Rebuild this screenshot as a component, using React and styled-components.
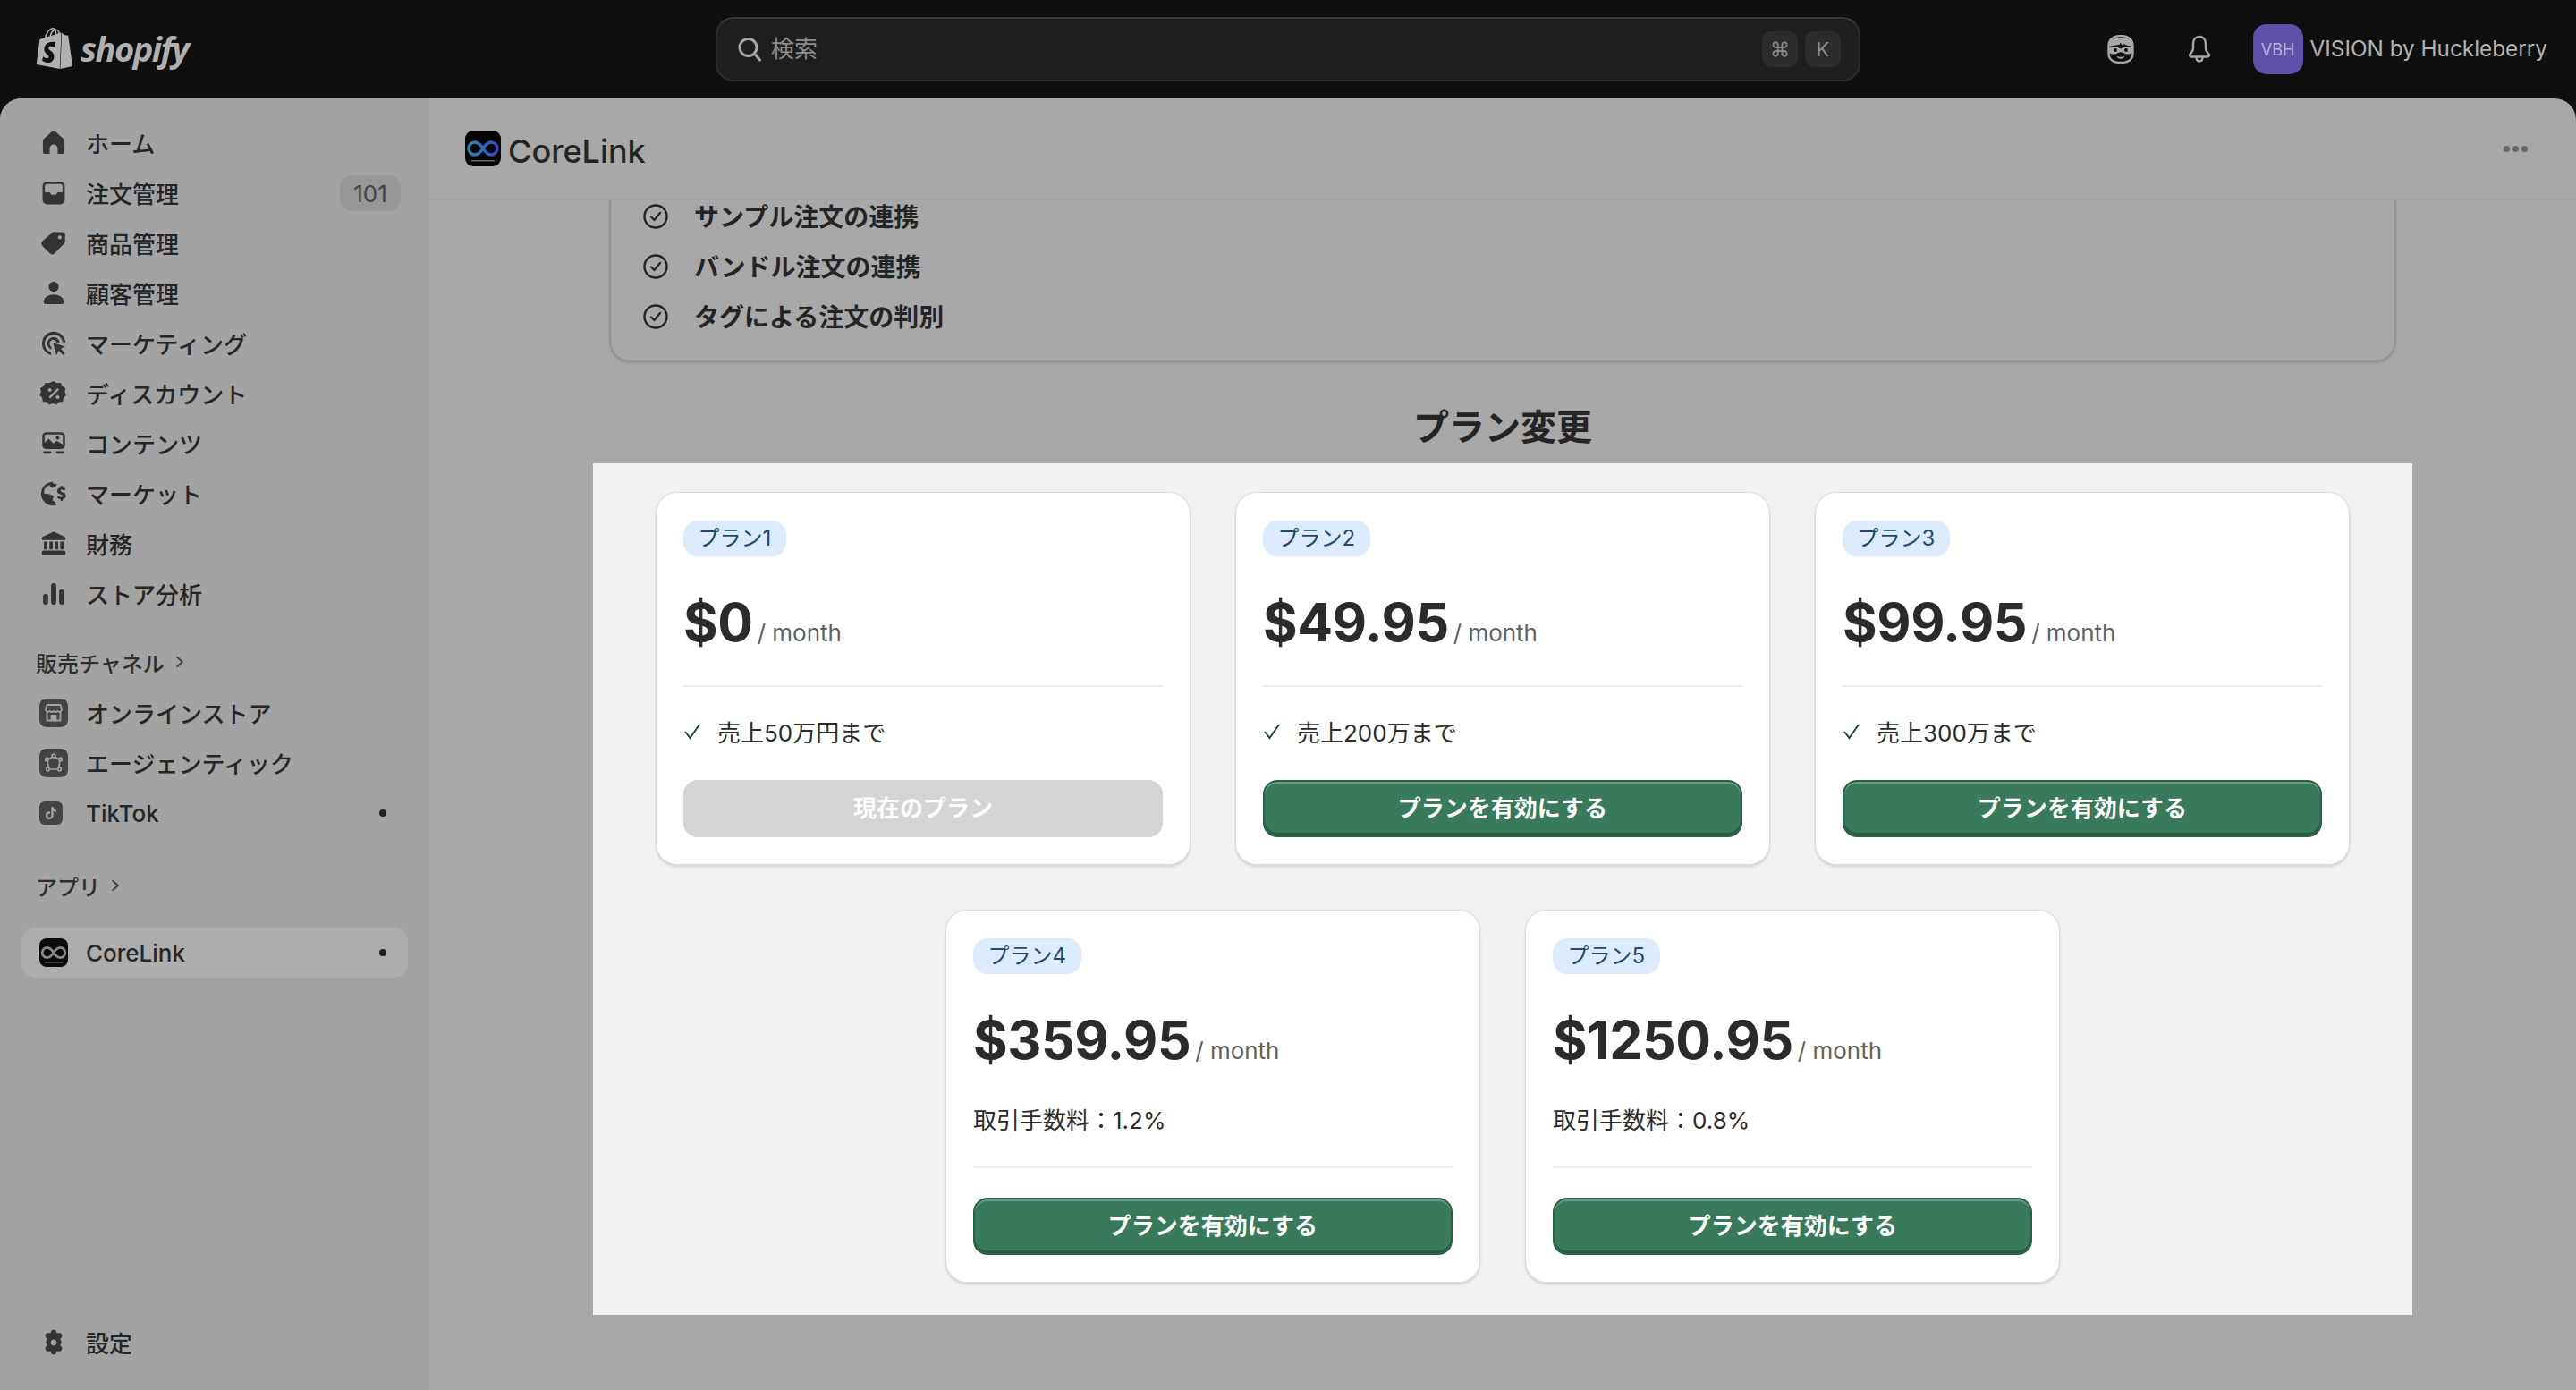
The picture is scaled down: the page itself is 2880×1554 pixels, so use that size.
import React from 'react';
import styled, { createGlobalStyle } from 'styled-components';
import { SiShopify, SiTiktok } from 'react-icons/si';

const GlobalStyle = createGlobalStyle`
  html, body {
    margin: 0;
    background: #0f0f0f;
  }
  body {
    font-family: Inter, "Noto Sans CJK JP", sans-serif;
  }
`;

const NavSvg = styled.svg`
  flex: none;
  margin: 0 -2px;
`;

const Icon = ({ children, size = 34, fill = '#333' }) => (
  <NavSvg width={size} height={size} viewBox="0 0 20 20" fill={fill} fillRule="evenodd">
    {children}
  </NavSvg>
);

const HomeIcon = () => (
  <Icon>
    <path d="M8.6 2.7 3.6 7.1A2 2 0 0 0 2.9 8.6V15.6A1.5 1.5 0 0 0 4.4 17.1H7.4V13.5A2.6 2.6 0 0 1 12.6 13.5V17.1H15.6A1.5 1.5 0 0 0 17.1 15.6V8.6A2 2 0 0 0 16.4 7.1L11.4 2.7A2.1 2.1 0 0 0 8.6 2.7Z" />
  </Icon>
);
const InboxIcon = () => (
  <Icon>
    <path d="M5.5 2.500h9A2.800 2.800 0 0 1 17.300 5.300v9.200a2.800 2.800 0 0 1-2.800 2.800h-9A2.800 2.800 0 0 1 2.700 14.500V5.300A2.800 2.800 0 0 1 5.500 2.500ZM5.500 4a1.300 1.300 0 0 0-1.300 1.300V9.400h3.300l.9 1.600h3.200l.9-1.600h3.300V5.300A1.300 1.300 0 0 0 14.500 4Z" />
  </Icon>
);
const TagIcon = () => (
  <Icon>
    <path d="M11.400 2.600h4.400a1.700 1.700 0 0 1 1.700 1.700v4.400a2.200 2.200 0 0 1-.6 1.500l-6.300 6.400a2.200 2.200 0 0 1-3.100 0l-4.900-4.900a2.200 2.200 0 0 1 0-3.100l6.300-5.400a2.200 2.200 0 0 1 2.500-.6ZM14 4.900a1.200 1.200 0 1 0 .01 0Z" />
  </Icon>
);
const PersonIcon = () => (
  <Icon>
    <circle cx="10" cy="5.600" r="3.300" />
    <path d="M10 10.800c-3.900 0-6.600 2.100-6.600 4.900 0 .8.600 1.300 1.300 1.300h10.600c.7 0 1.300-.5 1.300-1.300 0-2.800-2.700-4.900-6.600-4.900Z" />
  </Icon>
);
const TargetIcon = () => (
  <Icon>
    <path d="M10 2.200a7.800 7.800 0 0 0-1.600 15.400l-.3-1.800A6 6 0 1 1 15.900 9l1.800.6A7.800 7.800 0 0 0 10 2.200Z" />
    <path d="M10 5.800a4.200 4.200 0 0 0-1.300 8.200l-.4-2a2.400 2.400 0 1 1 3.700-2.600l2 .5A4.200 4.200 0 0 0 10 5.800Z" />
    <path d="M9.600 9.600l8 2.400-3 1.400 2.900 3-1.300 1.300-2.900-3-1.500 3.100Z" />
  </Icon>
);
const DiscountIcon = () => (
  <Icon>
    <path d="M10 1.800l2.100 1.300 2.500-.2 1 2.300 2.200 1.200-.5 2.500 1 2.200-1.900 1.700-.4 2.500-2.500.3-1.900 1.700-2.100-.9-2.300.9-1.900-1.700-2.500-.3-.4-2.500-1.700-1.700 1-2.200-.5-2.500 2.200-1.200 1-2.300 2.500.2Z M12.500 6.500 6.800 12.200l1 1 5.700-5.700Z M7.400 6.400a1.200 1.200 0 1 0 .01 0Z M12.600 11.200a1.200 1.200 0 1 0 .01 0Z" />
  </Icon>
);
const ContentIcon = () => (
  <Icon>
    <path d="M5 2.500h10A2.500 2.500 0 0 1 17.500 5v6A2.500 2.500 0 0 1 15 13.500H5A2.500 2.500 0 0 1 2.500 11V5A2.500 2.500 0 0 1 5 2.500ZM5 4a1 1 0 0 0-1 1v4.200l2.600-2.400 3.300 3 2.100-1.700L16 10.600V5a1 1 0 0 0-1-1ZM12.600 5a1.200 1.200 0 1 0 .01 0Z" />
    <rect x="3" y="15" width="5.600" height="1.600" rx=".8" />
    <rect x="11.400" y="15" width="5.600" height="1.600" rx=".8" />
  </Icon>
);
const MarketIcon = () => (
  <Icon>
    <path d="M9.500 2.200a7.800 7.800 0 0 0-1.200 15.500c1 .2 2.300.2 3.400-.1l-.8-2.200-1.700-1.200.8-2.700-3.300-1.300-3-.3a5.600 5.600 0 0 1 3.300-5.600l1.700 1.900 2.700-.9.700-1.500a7.800 7.800 0 0 0-2.600-.6Z" />
    <path d="M14.600 4.800v1.100c-1.400.2-2.300 1.100-2.300 2.300 0 1.400 1.100 1.900 2.300 2.300 1 .3 1.300.5 1.300 1 0 .4-.4.7-1.100.7-.6 0-1.300-.3-1.800-.7l-.8 1.200c.6.5 1.500.9 2.400 1v1h1.300v-1.100c1.400-.2 2.200-1.100 2.200-2.300 0-1.400-1-1.900-2.300-2.300-1-.3-1.200-.5-1.200-.9 0-.4.3-.7 1-.7.500 0 1 .2 1.500.5l.7-1.200c-.5-.4-1.100-.6-1.900-.7V4.800Z" />
  </Icon>
);
const BankIcon = () => (
  <Icon>
    <path d="M9.200 2.300 3.100 5.200c-.7.3-.9.8-.9 1.300v1h15.600v-1c0-.5-.2-1-.9-1.300l-6.100-2.900a1.900 1.900 0 0 0-1.600 0Z" />
    <path d="M3.600 8.500h2.200v5.200H3.600ZM7.200 8.500h2.200v5.200H7.200ZM10.800 8.500H13v5.200h-2.200ZM14.400 8.500h2.200v5.200h-2.200Z" />
    <rect x="2.200" y="14.400" width="15.600" height="3" rx="1" />
  </Icon>
);
const BarsIcon = () => (
  <Icon>
    <rect x="3" y="10" width="3.400" height="7" rx="1.500" />
    <rect x="8.300" y="3" width="3.400" height="14" rx="1.500" />
    <rect x="13.600" y="7" width="3.400" height="10" rx="1.500" />
  </Icon>
);
const GearIcon = () => (
  <Icon>
    <path d="M8.400 2.300c.4-1 2.800-1 3.200 0l.5 1.500 1.600-.2c1.200-.2 2.400 1.800 1.600 2.800l-1 1.200.7 1.400v1.400l-.7 1.400 1 1.200c.8 1-.4 3-1.600 2.800l-1.600-.2-.5 1.500c-.4 1-2.800 1-3.200 0l-.5-1.500-1.600.2c-1.200.2-2.400-1.800-1.600-2.800l1-1.200-.7-1.400V9.000l.7-1.400-1-1.200c-.8-1 .4-3 1.600-2.800l1.600.2ZM10 8.000a2.000 2.000 0 1 0 .01 0Z" />
  </Icon>
);
const Chevron = () => (
  <svg width="16" height="16" viewBox="0 0 14 14" fill="none" stroke="#444" strokeWidth="1.800" strokeLinecap="round" strokeLinejoin="round">
    <path d="M4.500 2.500 9.500 7l-5 4.500" />
  </svg>
);

const StoreGlyph = () => (
  <svg width="24" height="24" viewBox="0 0 24 24" fill="none" stroke="#a3a3a3" strokeWidth="1.800" strokeLinejoin="round">
    <path d="M4.500 3h15l1.500 5.500a2.600 2.600 0 0 1-4.500 1.500 3.300 3.300 0 0 1-4.500 0 3.300 3.300 0 0 1-4.500 0A2.600 2.600 0 0 1 3 8.500Z" />
    <path d="M4.500 11v9.500h15V11" />
    <path d="M9.500 20.500V15h5v5.500" fill="#a3a3a3" />
  </svg>
);
const AgenticGlyph = () => (
  <svg width="24" height="24" viewBox="0 0 24 24" fill="none" stroke="#a3a3a3" strokeWidth="1.700">
    <path d="M5 8.500 12 4.500l7 4M5 8.500l1.500 10.500M19 8.500 17.500 19M6.500 19h11" />
    <circle cx="12" cy="4" r="1.800" fill="#444" />
    <circle cx="4.500" cy="8" r="1.800" fill="#444" />
    <circle cx="19.500" cy="8" r="1.800" fill="#444" />
    <circle cx="5.500" cy="19" r="1.800" fill="#444" />
    <circle cx="18.500" cy="19" r="1.800" fill="#444" />
  </svg>
);
const LinkGlyph = ({ size, colored }) => (
  <svg width={size} height={size} viewBox="0 0 40 40" fill="none">
    <defs>
      <linearGradient id="linkBlue" x1="0" x2="1" y1="0" y2="0">
        <stop offset="0" stopColor="#2f86b8" />
        <stop offset="1" stopColor="#3a45c8" />
      </linearGradient>
    </defs>
    <path
      d="M20 20c-3-4.500-5.500-7-9-7a7 7 0 0 0 0 14c3.500 0 6-2.500 9-7s5.500-7 9-7a7 7 0 0 1 0 14c-3.500 0-6-2.500-9-7Z"
      stroke={colored ? 'url(#linkBlue)' : '#8a8a8a'}
      strokeWidth="3.400"
    />
    <rect x="7" y="33" width="26" height="1.500" fill="#666" />
  </svg>
);

const MaskIcon = () => (
  <svg width="30" height="32" viewBox="0 0 30 32" fill="none">
    <path d="M15 1C7 1 1.500 5 1.500 12v9C1.500 27.500 7 31 15 31s13.500-3.500 13.500-10v-9C28.500 5 23 1 15 1Z" stroke="#a8a8a8" strokeWidth="2.400" />
    <path d="M2 7c5-5 21-5 26 0l.5 6c-4-1-7-1-10-3l-1 2-3-3-1 2c-3 0-7 1-11 2Z" fill="#a8a8a8" />
    <path d="M2 14c4-1.500 9-1 13 1.500 4-2.500 9-3 13-1.500v6c-3 2-7 2-9 .5l-4-1.500-4 1.500c-2 1.500-6 1.500-9-.5Z" fill="#a8a8a8" />
    <circle cx="9" cy="17" r="2" fill="#0f0f0f" />
    <circle cx="21" cy="17" r="2" fill="#0f0f0f" />
    <path d="M10.500 24c2.500 1 6.500 1 9 0-1 3.500-8 3.500-9 0Z" fill="#a8a8a8" />
  </svg>
);
const BellIcon = () => (
  <svg width="30" height="32" viewBox="0 0 30 32" fill="none" stroke="#a8a8a8" strokeWidth="2.400" strokeLinejoin="round">
    <path d="M15 2c-4.500 0-7 3.500-7 8v5c0 3-2 5-4 7 0 1.500 1 2.500 2.500 2.500h17c1.500 0 2.500-1 2.500-2.500-2-2-4-4-4-7v-5c0-4.500-2.500-8-7-8Z" />
    <path d="M11.500 25c0 6 7 6 7 0" />
  </svg>
);

const Shell = styled.div`
  height: 1554px;
  display: flex;
  flex-direction: column;
  overflow: hidden;
  background: #0f0f0f;
`;

const Topbar = styled.header`
  height: 110px;
  flex: none;
  display: grid;
  grid-template-columns: 800px 1280px 1fr;
  align-items: center;
`;

const Brand = styled.div`
  display: flex;
  align-items: center;
  gap: 6px;
  padding: 0 0 2px 38px;
  color: #b0b0b0;
`;

const Wordmark = styled.span`
  font-family: "Open Sans", sans-serif;
  font-size: 38px;
  font-weight: 700;
  font-style: italic;
  letter-spacing: -1.500px;
  line-height: 1;
`;

const SearchBar = styled.div`
  height: 72px;
  box-sizing: border-box;
  display: flex;
  align-items: center;
  gap: 10px;
  padding: 0 20px 0 22px;
  background: #1e1e1e;
  border: 2px solid #2c2c2c;
  border-top-color: #383838;
  border-radius: 20px;
`;

const Placeholder = styled.span`
  flex: 1;
  padding-bottom: 6px;
  font-size: 26px;
  color: #8c8c8c;
`;

const Key = styled.span`
  width: 40px;
  height: 40px;
  display: flex;
  align-items: center;
  justify-content: center;
  background: #2c2c2c;
  border-radius: 10px;
  font-size: 22px;
  color: #8c8c8c;
`;

const Keys = styled.div`
  display: flex;
  gap: 8px;
`;

const TopRight = styled.div`
  display: flex;
  align-items: center;
  justify-content: flex-end;
  padding-right: 32px;
`;

const TopIconBox = styled.span`
  display: flex;
  margin-right: ${p => p.$gap}px;
`;

const Avatar = styled.span`
  width: 56px;
  height: 56px;
  display: flex;
  align-items: center;
  justify-content: center;
  background: #5f50a9;
  border-radius: 15px;
  font-size: 18px;
  color: #b8b3d6;
  margin-right: 8px;
`;

const StoreName = styled.span`
  padding-bottom: 2px;
  font-size: 24.300px;
  color: #b3b3b3;
  white-space: nowrap;
`;

const Page = styled.div`
  flex: 1;
  min-height: 0;
  display: flex;
  background: #a8a8a8;
  border-radius: 24px 24px 0 0;
  overflow: hidden;
`;

const Sidebar = styled.nav`
  width: 480px;
  flex: none;
  box-sizing: border-box;
  display: flex;
  flex-direction: column;
  padding: 22px 24px 25px;
  background: #a3a3a3;
`;

const NavRow = styled.div`
  height: 56px;
  flex: none;
  display: flex;
  align-items: center;
  gap: 20px;
  padding: 0 8px 0 20px;
  border-radius: 16px;
  font-size: 26px;
  font-weight: 500;
  color: #262626;
  background: ${p => (p.$active ? '#adadad' : 'transparent')};
  margin-top: ${p => p.$top || 0}px;
  ${p => p.$bottom && 'margin-top: auto;'}
`;

const IconSlot = styled.span`
  width: 32px;
  flex: none;
  display: flex;
  justify-content: ${p => (p.$start ? 'flex-start' : 'center')};
`;

const NavText = styled.span`
  flex: 1;
  padding-bottom: ${p => (p.$latin ? 0 : 2)}px;
`;

const Count = styled.span`
  height: 40px;
  width: 68px;
  display: flex;
  align-items: center;
  justify-content: center;
  background: #979797;
  border-radius: 14px;
  font-size: 26px;
  font-weight: 400;
  color: #444;
`;

const Dot = styled.span`
  width: 8px;
  height: 8px;
  margin-right: 16px;
  border-radius: 50%;
  background: #222;
`;

const SectionLabel = styled.div`
  height: 56px;
  flex: none;
  display: flex;
  align-items: center;
  gap: 9px;
  padding: 0 0 2px 16px;
  box-sizing: border-box;
  margin-top: ${p => p.$top}px;
  font-size: 24px;
  font-weight: 500;
  color: #2e2e2e;
`;

const AppTile = styled.span`
  width: ${p => p.$size || 32}px;
  height: ${p => p.$size || 32}px;
  flex: none;
  display: flex;
  align-items: center;
  justify-content: center;
  border-radius: ${p => p.$radius || 8}px;
  background: ${p => p.$bg || '#444'};
  overflow: hidden;
`;

const Main = styled.main`
  flex: 1;
  min-width: 0;
  display: flex;
  flex-direction: column;
`;

const MainHeader = styled.div`
  height: 114px;
  flex: none;
  box-sizing: border-box;
  display: flex;
  align-items: center;
  gap: 8px;
  padding: 0 54px 0 40px;
  border-bottom: 2px solid #a2a2a2;
`;

const AppTitle = styled.h1`
  flex: 1;
  margin: 5px 0 0;
  font-size: 36px;
  font-weight: 500;
  color: #242424;
`;

const MoreDots = styled.span`
  display: flex;
  gap: 3px;
  & > i {
    width: 7px;
    height: 7px;
    border-radius: 50%;
    background: #666;
  }
`;

const Content = styled.div`
  flex: 1;
  min-height: 0;
  display: flex;
  flex-direction: column;
  align-items: center;
`;

const FeatureCard = styled.section`
  width: 1998px;
  height: 181px;
  flex: none;
  box-sizing: border-box;
  padding-left: 36px;
  border: 2px solid #949494;
  border-top: none;
  border-radius: 0 0 24px 24px;
  box-shadow: 0 2px 2px #999;
`;

const FeatureRow = styled.div`
  height: 56px;
  display: flex;
  align-items: center;
  gap: 29px;
  font-size: 28px;
  font-weight: 700;
  color: #242424;
  &:first-child {
    margin-top: -10px;
  }
`;

const FeatureText = styled.span`
  padding-bottom: 3px;
`;

const PageTitle = styled.h2`
  margin: 49px 0 16px;
  height: 48px;
  font-size: 40px;
  line-height: 48px;
  font-weight: 700;
  color: #242424;
`;

const PlanPanel = styled.section`
  width: 2034px;
  height: 952px;
  flex: none;
  box-sizing: border-box;
  display: flex;
  flex-direction: column;
  gap: 50px;
  padding-top: 32px;
  background: #f1f1f1;
`;

const PlanRow = styled.div`
  display: flex;
  justify-content: center;
  gap: 50px;
`;

const PlanCard = styled.article`
  width: 598px;
  height: 417px;
  box-sizing: border-box;
  display: flex;
  flex-direction: column;
  align-items: flex-start;
  padding: 30.500px 30px 30px;
  background: #fff;
  border: 1.500px solid #dcdcdc;
  border-radius: 24px;
  box-shadow: 0 2px 3px rgba(0, 0, 0, 0.12);
`;

const PlanBadge = styled.span`
  height: 40px;
  box-sizing: border-box;
  display: flex;
  align-items: center;
  padding: 0 16.500px 4px;
  background: #dcebfd;
  border-radius: 16px;
  font-size: 24px;
  color: #1f4a70;
`;

const PriceRow = styled.div`
  display: flex;
  align-items: baseline;
  gap: 5px;
  margin-top: 34px;
  height: 78px;
  line-height: 80px;
`;

const Price = styled.span`
  font-size: 59px;
  font-weight: 700;
  letter-spacing: -0.400px;
  color: #2b2b2b;
`;

const Per = styled.span`
  font-size: 26px;
  color: #616161;
`;

const Divider = styled.hr`
  align-self: stretch;
  flex: none;
  height: 2px;
  margin: 32px 0 0;
  border: none;
  background: #ececec;
`;

const PlanLine = styled.div`
  display: flex;
  align-items: center;
  gap: 18px;
  height: 40px;
  margin: 30px 0 1px;
  font-size: 26px;
  color: #2b2b2b;
`;

const PlanButton = styled.button`
  align-self: stretch;
  height: 64px;
  flex: none;
  margin-top: auto;
  padding: 0 0 6px;
  font-family: inherit;
  font-size: 26px;
  font-weight: 600;
  color: #fff;
  border-radius: 16px;
  background: ${p => (p.disabled ? '#d4d4d4' : '#397a5d')};
  border: ${p => (p.disabled ? 'none' : '2px solid #2b6048')};
  box-shadow: ${p =>
    p.disabled ? 'none' : 'inset 0 2px 0 rgba(255,255,255,.25), inset 0 -3px 0 #2a5a44'};
`;

const navItems = [
  ['ホーム', <HomeIcon />],
  ['注文管理', <InboxIcon />, '101'],
  ['商品管理', <TagIcon />],
  ['顧客管理', <PersonIcon />],
  ['マーケティング', <TargetIcon />],
  ['ディスカウント', <DiscountIcon />],
  ['コンテンツ', <ContentIcon />],
  ['マーケット', <MarketIcon />],
  ['財務', <BankIcon />],
  ['ストア分析', <BarsIcon />],
];

const features = ['サンプル注文の連携', 'バンドル注文の連携', 'タグによる注文の判別'];

const Plan = ({ name, price, limit, fee, current }) => (
  <PlanCard>
    <PlanBadge>{name}</PlanBadge>
    <PriceRow>
      <Price>{price}</Price>
      <Per>/ month</Per>
    </PriceRow>
    {fee && <PlanLine>{fee}</PlanLine>}
    <Divider />
    {limit && (
      <PlanLine>
        <svg width="20" height="18" viewBox="0 0 20 18" fill="none" stroke="#1f4a3a" strokeWidth="2">
          <path d="M2 9l5.500 7L18 1" />
        </svg>
        {limit}
      </PlanLine>
    )}
    <PlanButton disabled={current}>{current ? '現在のプラン' : 'プランを有効にする'}</PlanButton>
  </PlanCard>
);

const App = () => {
  return (
    <Shell>
      <GlobalStyle />
      <Topbar>
        <Brand>
          <SiShopify size={46} />
          <Wordmark>shopify</Wordmark>
        </Brand>
        <SearchBar>
          <svg width="28" height="30" viewBox="0 0 28 30" fill="none" stroke="#a8a8a8" strokeWidth="3" strokeLinecap="round">
            <circle cx="12.500" cy="13" r="9.500" />
            <path d="M19.500 20l6 7" />
          </svg>
          <Placeholder>検索</Placeholder>
          <Keys>
            <Key>⌘</Key>
            <Key>K</Key>
          </Keys>
        </SearchBar>
        <TopRight>
          <TopIconBox $gap={58}>
            <MaskIcon />
          </TopIconBox>
          <TopIconBox $gap={45}>
            <BellIcon />
          </TopIconBox>
          <Avatar>VBH</Avatar>
          <StoreName>VISION by Huckleberry</StoreName>
        </TopRight>
      </Topbar>
      <Page>
        <Sidebar>
          {navItems.map(([label, icon, count]) => (
            <NavRow key={label}>
              <IconSlot>{icon}</IconSlot>
              <NavText>{label}</NavText>
              {count && <Count>{count}</Count>}
            </NavRow>
          ))}
          <SectionLabel $top={21}>
            販売チャネル <Chevron />
          </SectionLabel>
          <NavRow>
            <IconSlot>
              <AppTile>
                <StoreGlyph />
              </AppTile>
            </IconSlot>
            <NavText>オンラインストア</NavText>
          </NavRow>
          <NavRow>
            <IconSlot>
              <AppTile>
                <AgenticGlyph />
              </AppTile>
            </IconSlot>
            <NavText>エージェンティック</NavText>
          </NavRow>
          <NavRow>
            <IconSlot $start>
              <AppTile $size={26} $radius={6}>
                <SiTiktok size={14} color="#a3a3a3" />
              </AppTile>
            </IconSlot>
            <NavText $latin>TikTok</NavText>
            <Dot />
          </NavRow>
          <SectionLabel $top={26}>
            アプリ <Chevron />
          </SectionLabel>
          <NavRow $active $top={18}>
            <IconSlot>
              <AppTile $bg="#0a0a0a">
                <LinkGlyph size={32} />
              </AppTile>
            </IconSlot>
            <NavText $latin>CoreLink</NavText>
            <Dot />
          </NavRow>
          <NavRow $bottom>
            <IconSlot>
              <GearIcon />
            </IconSlot>
            <NavText>設定</NavText>
          </NavRow>
        </Sidebar>
        <Main>
          <MainHeader>
            <AppTile $size={40} $radius={9} $bg="#050505">
              <LinkGlyph size={40} colored />
            </AppTile>
            <AppTitle>CoreLink</AppTitle>
            <MoreDots>
              <i />
              <i />
              <i />
            </MoreDots>
          </MainHeader>
          <Content>
            <FeatureCard>
              {features.map(text => (
                <FeatureRow key={text}>
                  <svg width="28" height="28" viewBox="0 0 28 28" fill="none" stroke="#242424" strokeWidth="2.400">
                    <circle cx="14" cy="14" r="12.500" />
                    <path d="M9 14.500l3.500 3.500 6.500-8" strokeLinecap="round" strokeLinejoin="round" />
                  </svg>
                  <FeatureText>{text}</FeatureText>
                </FeatureRow>
              ))}
            </FeatureCard>
            <PageTitle>プラン変更</PageTitle>
            <PlanPanel>
              <PlanRow>
                <Plan name="プラン1" price="$0" limit="売上50万円まで" current />
                <Plan name="プラン2" price="$49.95" limit="売上200万まで" />
                <Plan name="プラン3" price="$99.95" limit="売上300万まで" />
              </PlanRow>
              <PlanRow>
                <Plan name="プラン4" price="$359.95" fee="取引手数料：1.2%" />
                <Plan name="プラン5" price="$1250.95" fee="取引手数料：0.8%" />
              </PlanRow>
            </PlanPanel>
          </Content>
        </Main>
      </Page>
    </Shell>
  );
};

export default App;
